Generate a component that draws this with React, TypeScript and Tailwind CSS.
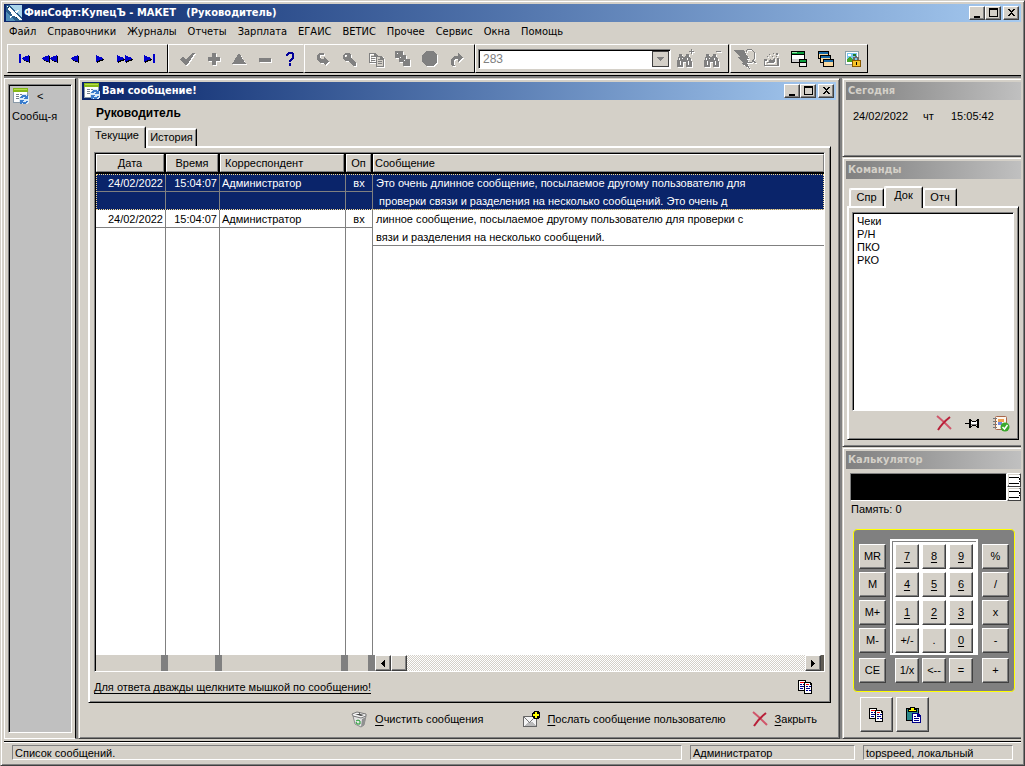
import type { ReactNode } from "react";
import { clsx } from "clsx";

const SANS = "font-['Liberation_Sans',Arial,sans-serif]";
const TAHOMA = "font-['DejaVu_Sans_Condensed','DejaVu_Sans',sans-serif]";
const RAISED = "border border-t-white border-l-white border-r-[#404040] border-b-[#404040] shadow-[inset_-1px_-1px_0_#808080] bg-[#d4d0c8]";
const SUNKEN = "border border-t-[#808080] border-l-[#808080] border-r-white border-b-white shadow-[inset_1px_1px_0_#000]";
const FRAME = "border border-t-[#d4d0c8] border-l-[#d4d0c8] border-r-[#404040] border-b-[#404040] shadow-[inset_1px_1px_0_#fff,inset_-1px_-1px_0_#808080] bg-[#d4d0c8]";
const PANE = "border border-r-0 border-t-[#d4d0c8] border-l-[#d4d0c8] border-b-[#404040] shadow-[inset_1px_1px_0_#fff,inset_0_-1px_0_#808080] bg-[#d4d0c8]";
const SHEET = "border border-t-white border-l-white border-r-black border-b-black shadow-[inset_1px_1px_0_#fff,inset_-1px_-1px_0_#808080]";

function Svg({ w = 16, h = 16, children, className }: { w?: number; h?: number; children: ReactNode; className?: string }) {
  return (
    <svg width={w} height={h} viewBox={`0 0 ${w} ${h}`} shapeRendering="crispEdges" aria-hidden="true" className={clsx("shrink-0", className)}>
      {children}
    </svg>
  );
}

/* ---------- icons ---------- */

const AppIcon = () => (
  <Svg>
    <path fill="#2a5e8c" d="M0 0h16v16H0z" />
    <path fill="#a9d4ea" d="M3 0h13v12z" />
    <path fill="#4f8db8" d="M0 6l9 10H0z" />
    <path fill="#fff" d="M1 1l4 2 2 3 3 2 2 3 3 2 1 2h-3l-3-3-3-1-2-3-2-2z" />
    <path fill="#fff" d="M9 6l4-1-3 3zM3 12l4-2-2 3z" />
    <path fill="#12304a" d="M2 2h1v1H2zM10 12h1v1h-1z" />
  </Svg>
);

const FormIcon = () => (
  <Svg>
    <path fill="#8a9aa8" d="M0 0h15v15H0z" />
    <path fill="#fff" d="M1 4h13v10H1z" />
    <path fill="#86b817" d="M0 0h15v4H0z" />
    <path fill="#b5dc4a" d="M1 1h13v1H1z" />
    <path fill="#76818c" d="M3 6h3v1H3zM7 6h5v1H7zM3 8h3v1H3zM3 10h3v1H3z" />
    <path fill="#dcebf8" d="M6 9l3-3h5l2 3v6l-3 1H8l-2-3z" />
    <path fill="#3a7ccc" d="M8 8l2-1h3v1h1V7h1v4h-4v-1h1V9h-2l-1 1H7zM7 12h4v1h-1v1h2l1-1h2l-2 3h-3l-1-1-1 1H7z" />
  </Svg>
);

const NavIcon = ({ d, bar }: { d: string; bar?: string }) => (
  <Svg w={18} h={10}>
    <path fill="#000" d={d} transform="translate(1 1)" />
    <path fill="#00c" d={d} />
    {bar && <path fill="#00c" d={bar} />}
  </Svg>
);

const CheckIcon = () => <Svg><path fill="#808080" d="M1 8l3-2 3 3 6-7h3L8 14H6z" /></Svg>;
const PlusIcon = () => <Svg><path fill="#808080" d="M6 2h4v4h4v4h-4v4H6v-4H2V6h4z" /></Svg>;
const UpIcon = () => <Svg><path fill="#808080" d="M8 2l7 11H1z" /></Svg>;
const MinusIcon = () => <Svg><path fill="#808080" d="M2 7h12v4H2z" /></Svg>;
const HelpIcon = () => (
  <Svg>
    <path fill="#000099" d="M4 3l2-2h4l2 2v4l-3 3v1H7V9l3-3V4L9 3H7L6 4v1H4zM7 12h2v3H7z" />
  </Svg>
);
const BackIcon = () => <Svg><path fill="#808080" d="M3 4l2-2h5v2H6v3l1 1h3V6l5 4-4 4-1-2H6L3 9z" /></Svg>;
const KeyIcon = () => (
  <Svg><path fill="#808080" fillRule="evenodd" d="M2 4l2-2h4l2 2v3l5 5v2l-1 1h-2l-5-5H4L2 8zM4 4v2h2V4z" /></Svg>
);
const PagesIcon = () => (
  <Svg>
    <path fill="#808080" fillRule="evenodd" d="M1 2h6l2 2h1v8H1zM2 3v8h7V6H6V3z" />
    <path fill="#d4d0c8" d="M8 5h7v10H8z" />
    <path fill="#808080" fillRule="evenodd" d="M8 5h5l3 3v8H8zM9 6v9h6V9h-3V6z" />
    <path fill="#808080" d="M3 5h3v1H3zM3 7h4v1H3zM3 9h4v1H3zM10 8h2v1h-2zM10 10h4v1h-4zM10 12h4v1h-4z" />
  </Svg>
);
const CascadeIcon = () => (
  <Svg>
    <path fill="#808080" d="M0 0h8v4h3v4h4v7H8v-4H4V7H0z" />
    <path fill="#fff" d="M2 2h1v1H2zM5 6h1v1H5zM9 9h1v1H9z" />
  </Svg>
);
const StopIcon = () => <Svg w={18} h={18}><path fill="#808080" d="M5 1h7l4 4v7l-4 4H5l-4-4V5z" /></Svg>;
const ForwardIcon = () => <Svg><path fill="#808080" d="M9 2l5 4-5 5V8H6l-1 2v3l1 2H3l-1-3V8l3-3h4z" /></Svg>;

const Binoculars = ({ sign }: { sign: string }) => (
  <Svg w={20} h={20}>
    <path fill="#808080" d="M4 5h3v2h1v1h2V7h1V5h3v2l2 3 1 3v5h-6v-5H8v5H2v-5l1-3 1-3z" />
    <path fill="#fff" d="M4 9h1v2H4zM12 9h1v2h-1zM5 12h1v4H5zM13 12h1v4h-1zM7 9h1v1H7z" />
    <path fill="#808080" d={sign} />
  </Svg>
);

const BoltIcon = () => (
  <Svg w={24} h={20}>
    <path fill="#808080" d="M0 1h11l5 9h-2l2 4h-2l3 6-9-6h2L5 8h2z" />
    <path fill="none" stroke="#808080" d="M12.500 3.500l2-3h4l3 3v6l-3 4h-3M20 12l3 2" />
  </Svg>
);
const PrintIcon = () => (
  <Svg>
    <path fill="#808080" fillRule="evenodd" d="M0 8h3v2H1v4h12V7h2v8H0z" />
    <path fill="#808080" d="M3 11h2V9h1V8h1v1h2V8h1V7h1v4h-1v1H3zM3 5h1v1H3zM5 3h1v1H5zM8 5h1v1H8zM9 2h1v1H9zM12 2h2v2h-2zM12 5h1v1h-1z" />
  </Svg>
);
const WindowsIcon = () => (
  <Svg>
    <path fill="#000" d="M0 0h14v12H0z" />
    <path fill="#fff" d="M1 4h12v7H1z" /><path fill="#0a9c3c" d="M1 1h12v2H1z" /><path fill="#9be8a8" d="M1 1h5v1H1z" />
    <path fill="#d0d0d0" d="M1 8h8v3H1z" />
    <path fill="#000" d="M8 8h8v8H8z" /><path fill="#eee" d="M9 12h6v3H9z" /><path fill="#0a9c3c" d="M9 9h6v2H9z" />
  </Svg>
);
const StackIcon = () => (
  <Svg>
    {["translate(0 0)", "translate(2 4)", "translate(5 8)"].map((t) => (
      <g key={t} transform={t}>
        <path fill="#000" d="M0 0h11v8H0z" />
        <path fill="#f8d8a0" d="M1 3h9v4H1z" />
        <path fill="#1769a8" d="M1 1h9v2H1z" />
      </g>
    ))}
  </Svg>
);
const LockIcon = () => (
  <Svg>
    <path fill="#8aa0a8" d="M0 0h14v14H0z" /><path fill="#fff" d="M1 1h12v12H1z" />
    <path fill="#79c6ee" d="M2 2h10v9H2z" /><path fill="#42a62a" d="M2 8l3-3 5 6H2z" /><path fill="#fff" d="M3 3h3v2H3z" /><path fill="#1f7a2a" d="M8 3h3v2H8z" />
    <path fill="none" stroke="#6b6b6b" strokeWidth="2" d="M9 10V7l2-1 2 1v3" />
    <path fill="#8a5a00" d="M7 9h9v7H7z" /><path fill="#f8c428" d="M8 10h7v5H8z" /><path fill="#000" d="M11 11h1v3h-1z" />
  </Svg>
);

const CopyIcon = () => (
  <Svg w={15} h={14}>
    <path fill="#000" d="M0 0h8v11H0z" /><path fill="#fff" d="M1 1h6v9H1z" />
    <path fill="#f00" d="M2 2h4v1H2z" /><path fill="#008" d="M2 4h2v1H2zM5 4h2v1H5zM2 6h4v1H2zM2 8h3v1H2z" />
    <path fill="#000" d="M6 2h6l2 2v10H6z" /><path fill="#fff" d="M7 3h5v2h1v8H7z" />
    <path fill="#f00" d="M8 4h3v1H8z" /><path fill="#008" d="M8 6h2v1H8zM11 6h2v1h-2zM8 8h4v1H8zM8 10h2v1H8zM11 10h2v1h-2z" />
  </Svg>
);
const PasteIcon = () => (
  <Svg>
    <path fill="#000" d="M1 1h13v13H1z" /><path fill="#2c8a8a" d="M2 2h11v11H2z" />
    <path fill="#000" d="M5 0h5v2h2v3H3V2h2z" /><path fill="#ff0" d="M6 1h3v2H6zM4 3h7v1H4z" />
    <path fill="#008" d="M7 6h6l3 3v7H7z" /><path fill="#fff" d="M8 7h4v3h3v5H8z" /><path fill="#008" d="M9 9h2v1H9zM9 11h5v1H9zM9 13h5v1H9z" />
  </Svg>
);
const CrossIcon = () => (
  <svg width="16" height="16" viewBox="0 0 16 16" aria-hidden="true" className="shrink-0">
    <path fill="none" stroke="#d0566a" strokeWidth="2" d="M1 1c5 4 9 8 14 13" />
    <path fill="none" stroke="#b81f38" strokeWidth="2" d="M14 2C9 6 5 10 2 15" />
  </svg>
);
const PinIcon = () => (
  <Svg w={15} h={11}>
    <path fill="#000" d="M0 5h5v1H0zM4 1h2v9H4zM6 2h1v1H6zM7 3h4v1H7zM6 8h1v1H6zM7 7h4v1H7zM11 2h1v1h-1zM11 8h1v1h-1zM12 1h2v9h-2z" />
    <path fill="#808080" d="M6 6h6v1H6z" /><path fill="#fff" d="M6 4h6v2H6z" />
  </Svg>
);
const BookCheckIcon = () => (
  <svg width="17" height="17" viewBox="0 0 17 17" aria-hidden="true" className="shrink-0">
    <rect x="2.500" y="1.500" width="11" height="13" rx="1" fill="#fdf6ee" stroke="#a9674a" />
    <path d="M5 4h6v3H5z" fill="#f0a050" />
    <path d="M5 7h4v3H5z" fill="#7088e0" />
    <path d="M0 3.500h4M0 6.500h4M0 9.500h4M0 12.500h4" stroke="#777" />
    <circle cx="12" cy="12" r="4.500" fill="#3aa82c" />
    <path d="M9.500 12l2 2 3-4" fill="none" stroke="#fff" strokeWidth="1.500" />
  </svg>
);
const TrashIcon = () => (
  <svg width="17" height="17" viewBox="0 0 17 17" aria-hidden="true" className="shrink-0">
    <path d="M2 5l2 8 6 3 3-2 2-9z" fill="#e4e4e4" stroke="#8a8a8a" />
    <path d="M11 8l-1 8 3-2 2-8z" fill="#909090" />
    <path d="M1 3l5-2 9 2v2l-5 2-8-2z" fill="#f4f4f4" stroke="#777" />
    <path d="M4 3h4V1l1 2 4 1-3 1z" fill="#444" />
    <path d="M5 10l2-1 2 1M9 10v3H6l-1-2" fill="none" stroke="#1a9a2a" />
  </svg>
);
const MailIcon = () => (
  <Svg w={17} h={17}>
    <path fill="#666" d="M0 5h14v11H0z" /><path fill="#f4f4f4" d="M1 6h12v9H1z" />
    <path fill="#bbb" d="M1 15l4-4h4l4 4z" />
    <path fill="none" stroke="#777" d="M.5 5.500l6 6 6-6" />
    <path fill="#000" d="M11 0h4l2 2v4l-2 2h-4L9 6V2z" /><path fill="#ff0" d="M12 1h2v2h2v2h-2v2h-2V5h-2V3h2z" />
  </Svg>
);

/* ---------- building blocks ---------- */

function WindowButtons() {
  const buttons = [
    { label: "Свернуть", d: "M3 9h6v2H3z" },
    { label: "Развернуть", d: "M2 1h9v9H2zM3 3v6h7V3z" },
    { label: "Закрыть", d: "M3 2h2v1h1v1h1V3h1V2h2v1H9v1H8v1H7v1h1v1h1v1h1v1H8V8H7V7H6v1H5v1H3V8h1V7h1V6h1V5H5V4H4V3H3z" },
  ];
  return (
    <div className="flex pr-[2px]">
      {buttons.map((b, i) => (
        <button key={b.label} aria-label={b.label} className={clsx(RAISED, "flex h-[14px] w-4 items-center justify-center", i === 2 && "ml-[2px]")}>
          <Svg w={13} h={12}><path fill="#000" fillRule="evenodd" d={b.d} /></Svg>
        </button>
      ))}
    </div>
  );
}

function TitleBar({ icon, title }: { icon: ReactNode; title: string }) {
  return (
    <div className={clsx(TAHOMA, "flex h-[18px] shrink-0 items-center gap-[2px] bg-linear-to-r from-[#0a246a] to-[#a6caf0] pl-[2px] text-[11px] font-bold text-white")}>
      {icon}
      <h2 className="flex-1 whitespace-pre">{title}</h2>
      <WindowButtons />
    </div>
  );
}

const PaneTitle = ({ children }: { children: ReactNode }) => (
  <h2 className={clsx(TAHOMA, "h-[18px] shrink-0 bg-linear-to-r from-[#808080] to-[#c0c0c0] pl-[2px] text-[11px] leading-[18px] font-bold text-[#d4d0c8]")}>{children}</h2>
);

const ToolGroup = ({ children, className }: { children: ReactNode; className?: string }) => (
  <div className={clsx("flex h-[29px] items-center border border-t-white border-l-white border-b-black", className)}>{children}</div>
);

function Tool({ label, children, disabled, className = "w-[27px]" }: { label: string; children: ReactNode; disabled?: boolean; className?: string }) {
  return (
    <button aria-label={label} disabled={disabled} className={clsx("flex h-6 items-center justify-center", className, disabled && "drop-shadow-[1px_1px_0_#fff]")}>
      {children}
    </button>
  );
}

function Tab({ children, active, className }: { children: ReactNode; active?: boolean; className?: string }) {
  return (
    <button role="tab" aria-selected={!!active}
      className={clsx("rounded-t-[2px] border border-b-0 border-t-white border-l-white border-r-black bg-[#d4d0c8] text-center whitespace-nowrap shadow-[inset_1px_1px_0_#fff,inset_-1px_0_0_#808080]",
        active ? "z-10 -mb-[2px] h-[22px] pb-1" : "h-[18px]", className)}>
      {children}
    </button>
  );
}

/* ---------- data ---------- */

const MENU = ["Файл", "Справочники", "Журналы", "Отчеты", "Зарплата", "ЕГАИС", "ВЕТИС", "Прочее", "Сервис", "Окна", "Помощь"];

const NAV = [
  { label: "Первая", d: "M13 1v7L6 5V4z", bar: "M3 0h2v9H3z" },
  { label: "Страница назад", d: "M8 1v7L1 5V4zM16 1v7L9 5V4z" },
  { label: "Назад", d: "M12 1v7L5 5V4z" },
  { label: "Вперед", d: "M5 1v7l7-3V4z" },
  { label: "Страница вперед", d: "M1 1v7l7-3V4zM9 1v7l7-3V4z" },
  { label: "Последняя", d: "M3 1v7l7-3V4z", bar: "M12 0h2v9h-2z" },
];

const MESSAGES = [
  {
    date: "24/02/2022", time: "15:04:07", from: "Администратор", op: "вх", selected: true,
    lines: ["Это очень длинное сообщение, посылаемое другому пользователю для", " проверки связи и разделения на несколько сообщений. Это очень д"],
  },
  {
    date: "24/02/2022", time: "15:04:07", from: "Администратор", op: "вх", selected: false,
    lines: ["линное сообщение, посылаемое другому пользователю для проверки с", "вязи и разделения на несколько сообщений."],
  },
];

const COLUMNS = [
  { title: "Дата", width: "w-[70px]", align: "text-center" },
  { title: "Время", width: "w-[54px]", align: "text-center" },
  { title: "Корреспондент", width: "w-[126px]", align: "text-left pl-1" },
  { title: "Оп", width: "w-[27px]", align: "text-center" },
  { title: "Сообщение", width: "", align: "text-left pl-px" },
];

const COMMANDS = ["Чеки", "Р/Н", "ПКО", "РКО"];
const DIGITS = ["7", "8", "9", "4", "5", "6", "1", "2", "3", "+/-", ".", "0"];

/* ---------- sections ---------- */

function Toolbar() {
  return (
    <div className="flex shrink-0 border-b border-black pt-[2px] pb-[2px] pl-[3px]">
      <ToolGroup className="w-[161px] border-r-black px-1">
        {NAV.map((n) => <Tool key={n.label} label={n.label} className="flex-1"><NavIcon d={n.d} bar={n.bar} /></Tool>)}
      </ToolGroup>
      <ToolGroup className="w-[136px] border-r-[#d4d0c8] pl-1">
        <Tool disabled label="Принять"><CheckIcon /></Tool>
        <Tool disabled label="Добавить"><PlusIcon /></Tool>
        <Tool disabled label="Изменить" className="w-6"><UpIcon /></Tool>
        <Tool disabled label="Удалить"><MinusIcon /></Tool>
        <Tool label="Справка" className="w-6"><HelpIcon /></Tool>
      </ToolGroup>
      <ToolGroup className="w-[171px] border-r-black pl-[3px]">
        <Tool disabled label="Вернуть"><BackIcon /></Tool>
        <Tool disabled label="Ключ"><KeyIcon /></Tool>
        <Tool disabled label="Копировать"><PagesIcon /></Tool>
        <Tool disabled label="Каскад"><CascadeIcon /></Tool>
        <Tool disabled label="Стоп"><StopIcon /></Tool>
        <Tool disabled label="Перейти"><ForwardIcon /></Tool>
      </ToolGroup>
      <ToolGroup className="w-[254px] border-r-black pl-[2px]">
        <div className={clsx(SUNKEN, "flex h-5 w-[193px] items-center bg-white p-px pt-[2px]")}>
          <input aria-label="Поиск" defaultValue="283" className="min-w-0 flex-1 pl-[3px] text-xs text-[#808080] outline-none" />
          <button aria-label="Открыть список" className="flex h-4 w-[17px] items-center justify-center border border-[#404040] bg-[#d4d0c8]">
            <Svg w={7} h={4}><path fill="#808080" d="M0 0h7L4 4H3z" /></Svg>
          </button>
        </div>
        <Tool disabled label="Найти далее"><Binoculars sign="M16 0h1v2h2v1h-2v2h-1V3h-2V2h2z" /></Tool>
        <Tool disabled label="Найти ранее"><Binoculars sign="M14 2h5v1h-5z" /></Tool>
      </ToolGroup>
      <ToolGroup className="ml-px w-[138px] border-r-black">
        <Tool disabled label="Выполнить"><BoltIcon /></Tool>
        <Tool disabled label="Печать"><PrintIcon /></Tool>
        <Tool label="Новое окно"><WindowsIcon /></Tool>
        <Tool label="Окна каскадом"><StackIcon /></Tool>
        <Tool label="Блокировка"><LockIcon /></Tool>
      </ToolGroup>
    </div>
  );
}

function HScroll() {
  return (
    <div className="flex h-4 shrink-0 bg-[#d4d0c8]">
      <span className="ml-[65px] w-[7px] bg-[#808080]" />
      <span className="ml-[47px] w-[7px] bg-[#808080]" />
      <span className="ml-[119px] w-[7px] bg-[#808080]" />
      <span className="ml-5 w-[7px] bg-[#808080]" />
      <button aria-label="Прокрутить влево" className={clsx(RAISED, "flex w-4 items-center justify-center")}>
        <Svg w={4} h={7}><path d="M4 0v7L0 4V3z" /></Svg>
      </button>
      <span className={clsx(RAISED, "w-4")} />
      <span className="flex-1 bg-[repeating-conic-gradient(#d4d0c8_0_25%,#fff_0_50%)] bg-[length:2px_2px]" />
      <button aria-label="Прокрутить вправо" className={clsx(RAISED, "flex w-4 items-center justify-center")}>
        <Svg w={4} h={7}><path d="M0 0v7l4-3V3z" /></Svg>
      </button>
      <span className="w-[3px] bg-[#605c54]" />
    </div>
  );
}

function MessageGrid() {
  return (
    <div className={clsx(SUNKEN, "flex min-h-0 flex-1 flex-col bg-white pt-px pl-px")}>
      <div className="min-h-0 flex-1">
        <table className="h-full w-full table-fixed border-separate border-spacing-0">
          <thead>
            <tr className="h-5">
              {COLUMNS.map((c) => (
                <th key={c.title} className={clsx("h-5 border-r-2 border-b-2 border-black bg-[#d4d0c8] p-0 font-normal last:border-r-0", c.width)}>
                  <div className={clsx("h-[18px] border border-t-white border-r-[#808080] border-b-[#808080] border-l-white leading-4", c.align)}>{c.title}</div>
                </th>
              ))}
            </tr>
          </thead>
          <tbody>
            {MESSAGES.map((m, i) => (
              <tr key={i} className={clsx("h-9 align-top", m.selected && "bg-[#0a246a] text-white outline-1 -outline-offset-1 outline-[#f5db95] outline-dotted")}>
                {[m.date, m.time, m.from, m.op].map((v, c) => (
                  <td key={c} className="h-9 border-r border-[#808080] p-0">
                    <div className={clsx("h-[18px] border-b border-[#808080] leading-[18px]", c < 2 && "pr-[2px] text-right", c === 2 && "pl-[2px]", c === 3 && "text-center")}>{v}</div>
                  </td>
                ))}
                <td className="h-9 border-b border-[#808080] p-0 pl-[3px] whitespace-pre">
                  {m.lines.map((l, n) => <div key={l} className={n === 0 ? "h-[18px] leading-[18px]" : "h-[17px] leading-[18px]"}>{l}</div>)}
                </td>
              </tr>
            ))}
            <tr>
              {COLUMNS.map((c) => <td key={c.title} className="border-r border-[#808080] last:border-r-0" />)}
            </tr>
          </tbody>
        </table>
      </div>
      <HScroll />
    </div>
  );
}

const Action = ({ icon, text }: { icon: ReactNode; text: string }) => (
  <button className="flex items-center gap-[7px]">
    {icon}
    <span><u className="underline-offset-2">{text[0]}</u>{text.slice(1)}</span>
  </button>
);

function MessageWindow() {
  return (
    <section className={clsx(FRAME, "flex min-w-0 flex-1 flex-col p-[3px]")}>
      <TitleBar icon={<FormIcon />} title="Вам сообщение!" />
      <h3 className="mt-[5px] ml-[14px] h-[17px] text-xs leading-4 font-bold">Руководитель</h3>
      <div role="tablist" className="mt-1 ml-[6px] flex items-end">
        <Tab active className="w-[58px]">Текущие</Tab>
        <Tab className="w-[51px]">История</Tab>
      </div>
      <div className={clsx(SHEET, "mr-[5px] ml-[6px] flex min-h-0 flex-1 flex-col px-[5px] pt-[5px]")}>
        <MessageGrid />
        <div className="flex h-[30px] shrink-0 items-center justify-between pr-3">
          <span className="underline underline-offset-2">Для ответа дважды щелкните мышкой по сообщению!</span>
          <button aria-label="Копировать сообщение"><CopyIcon /></button>
        </div>
      </div>
      <div className="flex h-8 shrink-0 items-center justify-end pr-[19px]">
        <Action icon={<TrashIcon />} text="Очистить сообщения" />
        <div className="ml-10"><Action icon={<MailIcon />} text="Послать сообщение пользователю" /></div>
        <div className="ml-[26px]"><Action icon={<CrossIcon />} text="Закрыть" /></div>
      </div>
    </section>
  );
}

const CalcKey = ({ k, className = "w-[27px]" }: { k: string; className?: string }) => (
  <button className={clsx(RAISED, "h-[25px] text-[11px]", /^\d$/.test(k) && "underline underline-offset-2", className)}>{k}</button>
);

function Calculator() {
  return (
    <section className={clsx(PANE, "flex min-h-0 flex-1 flex-col py-[3px] pl-[3px]")}>
      <PaneTitle>Калькулятор</PaneTitle>
      <div className="mt-1 ml-1 flex">
        <output aria-label="Результат" className={clsx(SUNKEN, "h-[28px] flex-1 bg-black")} />
        <div className="flex w-[14px] flex-col">
          {["Больше", "Меньше"].map((l) => (
            <button key={l} aria-label={l} className={clsx(RAISED, "flex flex-1 items-center justify-center")}>
              <Svg w={11} h={11}><path fill="#fff" d="M0 0h11v11H0z" /><path d="M0 2h10v1H0zM0 8h10v1H0zM10 3h1v2h-1zM10 6h1v1h-1z" /></Svg>
            </button>
          ))}
        </div>
      </div>
      <p className="ml-[5px] leading-4">Память: 0</p>
      <div className="mt-3 mr-[6px] ml-[7px] flex h-[163px] shrink-0 justify-between rounded-[4px] border border-[#ff0] bg-[#808080] px-[5px] pt-[9px]">
        <div className="flex flex-col gap-[3px] pt-[5px]">
          {["MR", "M", "M+", "M-"].map((k) => <CalcKey key={k} k={k} />)}
          <CalcKey k="CE" className="mt-[2px] w-[27px]" />
        </div>
        <div className="flex flex-col gap-[3px]">
          <div className="grid grid-cols-3 gap-[3px] border-2 border-white bg-white px-[3px] pt-[3px] shadow-[inset_1px_1px_0_#808080]">
            {DIGITS.map((k) => <CalcKey key={k} k={k} className="w-6" />)}
          </div>
          <div className="flex gap-[3px] pl-[5px]">
            {["1/x", "<--", "="].map((k) => <CalcKey key={k} k={k} className="w-6" />)}
          </div>
        </div>
        <div className="flex flex-col gap-[3px] pt-[5px]">
          {["%", "/", "x", "-"].map((k) => <CalcKey key={k} k={k} />)}
          <CalcKey k="+" className="mt-[2px] w-[27px]" />
        </div>
      </div>
      <div className="mt-[5px] ml-[14px] flex gap-[3px]">
        <button aria-label="Копировать" className={clsx(RAISED, "flex h-[35px] w-[33px] items-center justify-center")}><CopyIcon /></button>
        <button aria-label="Вставить" className={clsx(RAISED, "flex h-[35px] w-[33px] items-center justify-center")}><PasteIcon /></button>
      </div>
    </section>
  );
}

function SidePanes() {
  return (
    <aside className="flex w-[179px] shrink-0 flex-col">
      <section className={clsx(PANE, "h-[79px] shrink-0 pt-[3px] pl-[3px]")}>
        <PaneTitle>Сегодня</PaneTitle>
        <div className="flex pt-2 pl-[7px] leading-4">
          <span className="w-[70px]">24/02/2022</span>
          <span className="w-[28px]">чт</span>
          <span>15:05:42</span>
        </div>
      </section>
      <section className={clsx(PANE, "flex h-[290px] shrink-0 flex-col py-[3px] pl-[3px]")}>
        <PaneTitle>Команды</PaneTitle>
        <div role="tablist" className="mt-[7px] ml-[3px] flex items-end">
          <Tab className="w-[35px]">Спр</Tab>
          <Tab active className="w-[39px]">Док</Tab>
          <Tab className="w-[34px]">Отч</Tab>
        </div>
        <div className={clsx(SHEET, "mr-[2px] mb-[3px] ml-px flex flex-1 flex-col p-1 pt-[5px]")}>
          <ul className={clsx(SUNKEN, "flex-1 bg-white pt-[2px] pl-1 leading-[13px]")}>
            {COMMANDS.map((c) => <li key={c}>{c}</li>)}
          </ul>
          <div className="flex h-6 items-center justify-end gap-[13px] pr-1">
            <button aria-label="Удалить команду"><CrossIcon /></button>
            <button aria-label="Закрепить"><PinIcon /></button>
            <button aria-label="Готово"><BookCheckIcon /></button>
          </div>
        </div>
      </section>
      <Calculator />
    </aside>
  );
}

const StatusCell = ({ children, className }: { children: ReactNode; className: string }) => (
  <span className={clsx("h-[15px] border border-t-[#808080] border-r-white border-b-white border-l-[#808080] pl-[2px] text-[11px] leading-[14px]", className)}>{children}</span>
);

export default function App() {
  return (
    <div className={clsx(SANS, FRAME, "flex h-screen flex-col overflow-hidden p-[3px] pb-[2px] text-[11px] text-black")}>
      <TitleBar icon={<AppIcon />} title="ФинСофт:КупецЪ - МАКЕТ   (Руководитель)" />
      <nav className={clsx(TAHOMA, "flex h-5 shrink-0 items-center gap-[11px] pl-[5px] text-[11px]")}>
        {MENU.map((m) => <button key={m}>{m}</button>)}
      </nav>
      <Toolbar />
      <main className="flex min-h-0 flex-1 bg-[#808080] pt-[2px]">
        <aside className="flex w-[72px] shrink-0 flex-col border border-t-white border-r-black border-b-white border-l-white bg-[#d4d0c8] p-[3px] pt-[5px] pb-[5px]">
          <button className={clsx(SUNKEN, "flex flex-1 flex-col items-start bg-[#c0c0c0] pt-[3px] pl-1")}>
            <span className="flex items-center gap-2"><FormIcon /> &lt;</span>
            <span className="-ml-px pt-[3px] whitespace-nowrap">Сообщ-я</span>
          </button>
        </aside>
        <div className="w-[2px] shrink-0" />
        <MessageWindow />
        <div className="w-[2px] shrink-0" />
        <SidePanes />
      </main>
      <footer className="mt-[2px] flex h-[22px] shrink-0 items-center gap-2 border-t border-black pr-2 pl-2 shadow-[inset_0_1px_0_#fff]">
        <StatusCell className="flex-1">Список сообщений.</StatusCell>
        <StatusCell className="w-[165px]">Администратор</StatusCell>
        <StatusCell className="w-[150px]">topspeed, локальный</StatusCell>
      </footer>
    </div>
  );
}
